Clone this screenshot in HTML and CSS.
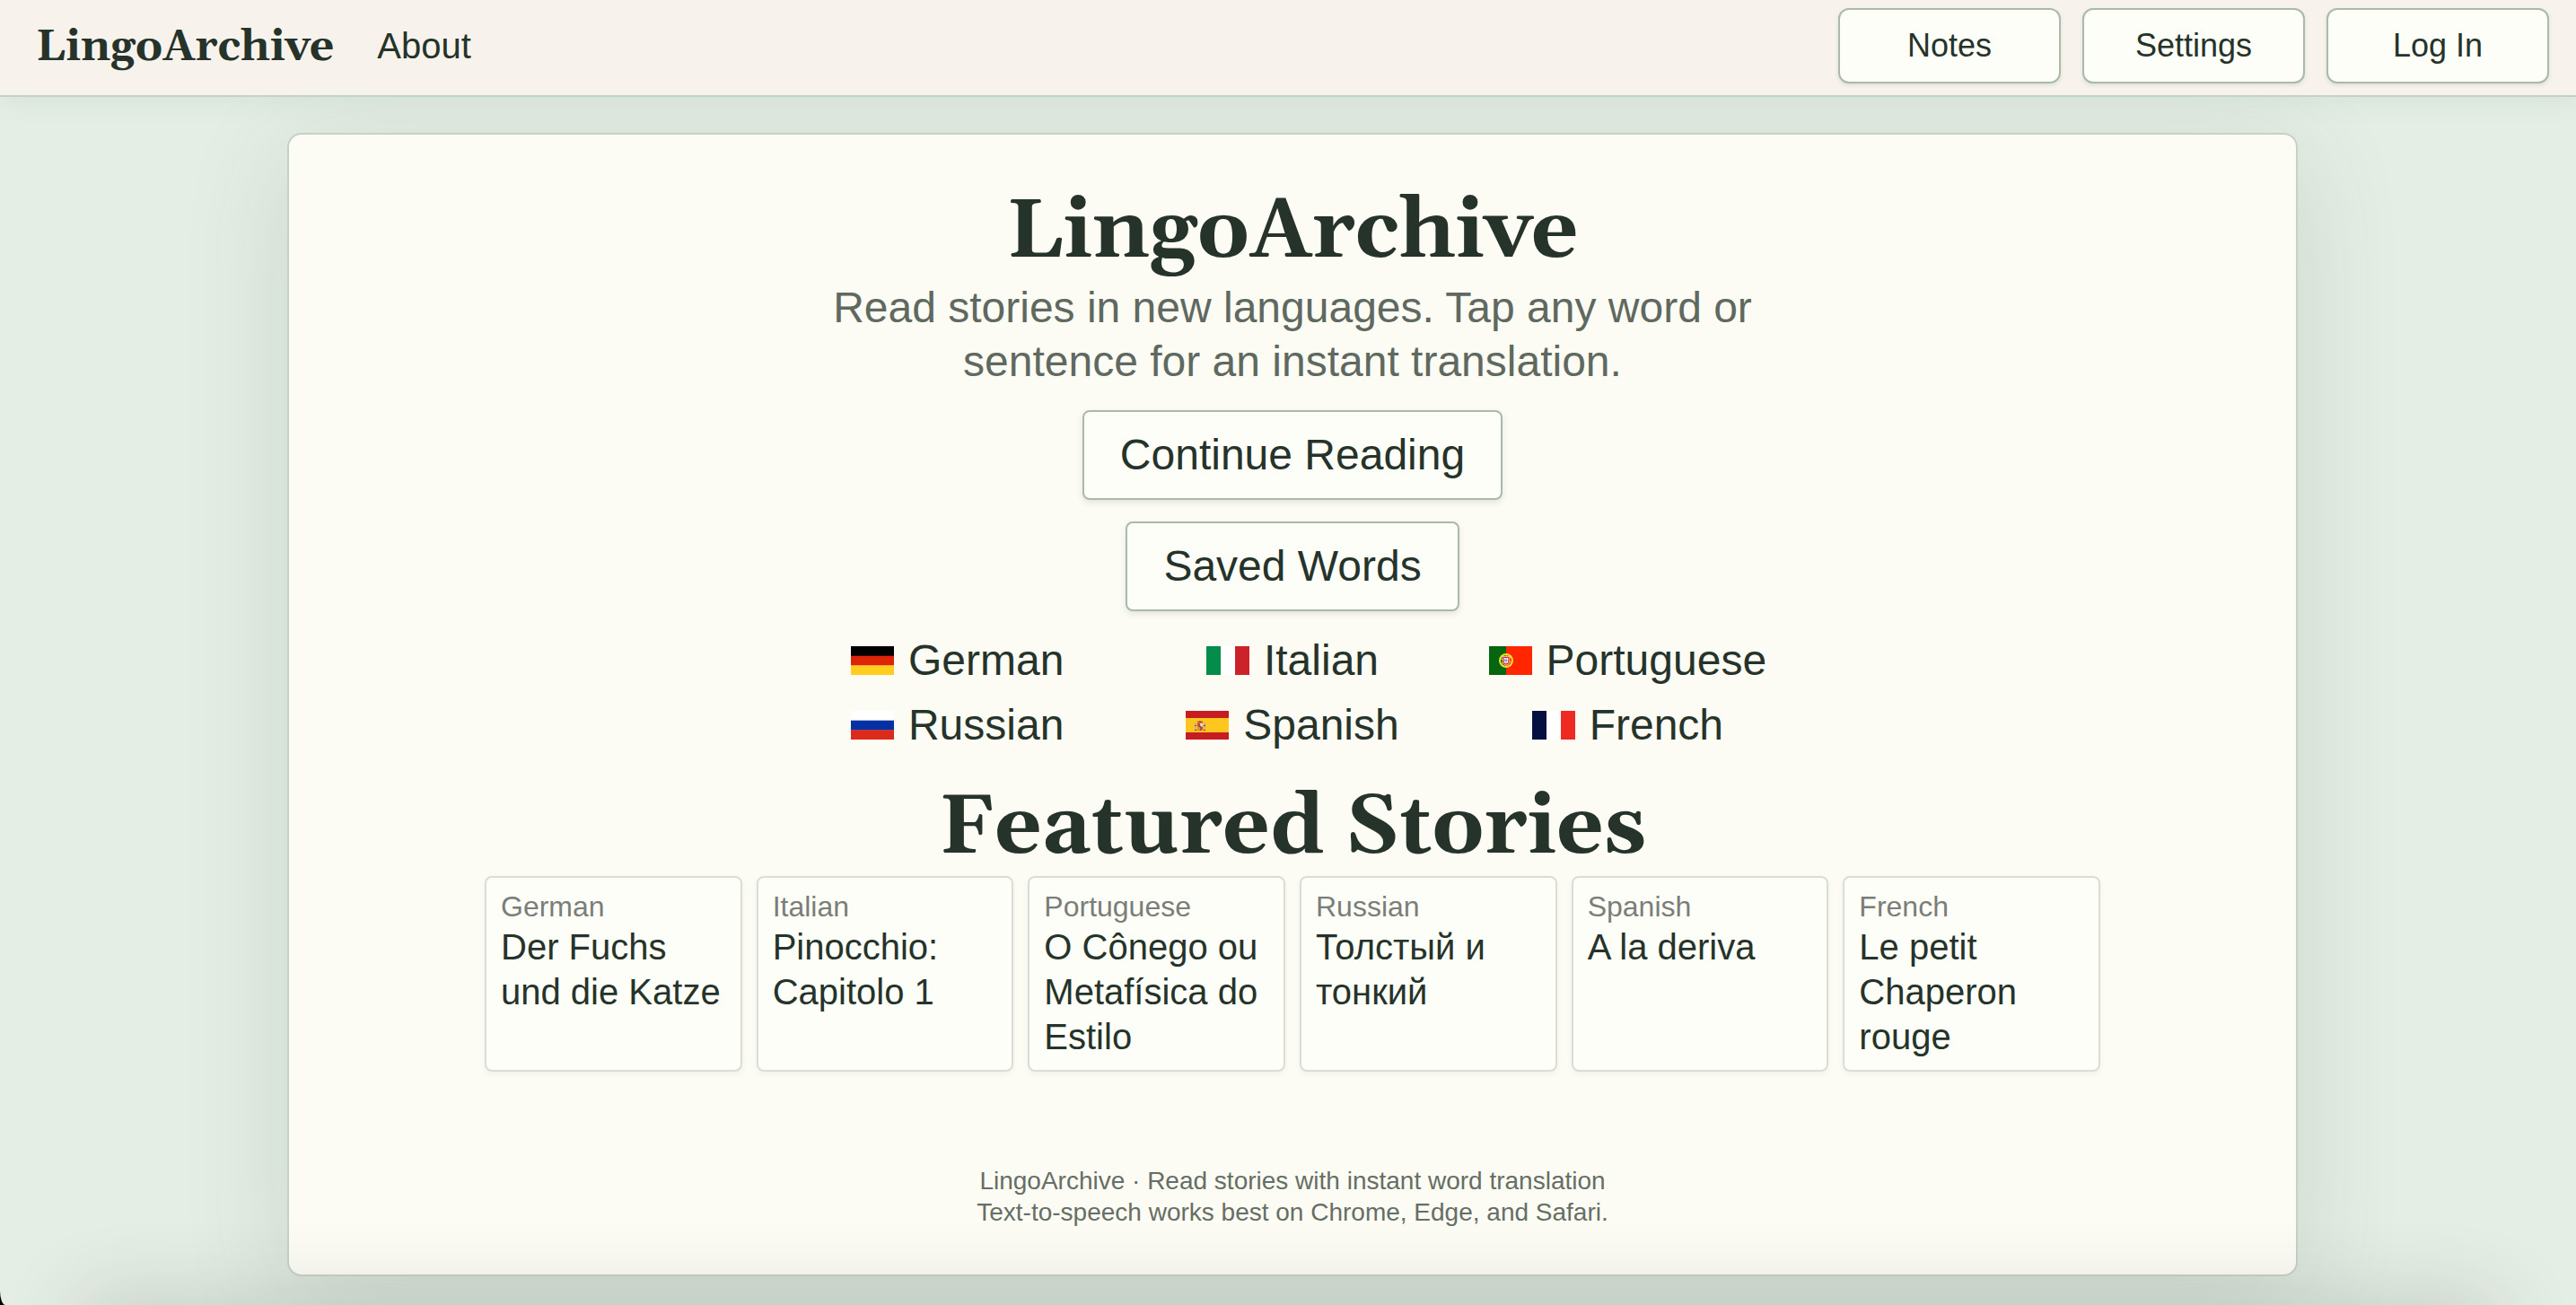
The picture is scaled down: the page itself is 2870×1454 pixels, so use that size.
FILE: index.html
```html
<!DOCTYPE html>
<html lang="en">
<head>
  <meta charset="UTF-8">
  <meta name="viewport" content="width=device-width, initial-scale=1.0">
  <title>LingoArchive</title>
  <link rel="stylesheet" href="styles.css">
</head>
<body>

  <header class="site-header">
    <nav class="nav-left">
      <a class="brand" href="#">LingoArchive</a>
      <a class="nav-link" href="#">About</a>
    </nav>
    <div class="nav-actions">
      <button class="nav-btn">Notes</button>
      <button class="nav-btn">Settings</button>
      <button class="nav-btn">Log In</button>
    </div>
  </header>

  <main class="page-card">
    <h1 class="title">LingoArchive</h1>
    <p class="tagline">Read stories in new languages. Tap any word or sentence for an instant translation.</p>

    <div class="cta">
      <a class="cta-btn" href="#">Continue Reading</a>
      <a class="cta-btn" href="#">Saved Words</a>
    </div>

    <div class="languages">
      <a class="language" href="#">
        <svg class="flag" viewBox="0 0 48 32"><rect width="48" height="11" fill="#000"/><rect y="10.7" width="48" height="11" fill="#de2408"/><rect y="21.3" width="48" height="10.7" fill="#ffcc1f"/></svg>
        German
      </a>
      <a class="language" href="#">
        <svg class="flag" viewBox="0 0 48 32"><rect width="48" height="32" fill="#fff"/><rect width="16" height="32" fill="#048c4a"/><rect x="32" width="16" height="32" fill="#cc2229"/></svg>
        Italian
      </a>
      <a class="language" href="#">
        <svg class="flag" viewBox="0 0 48 32">
          <rect width="48" height="32" fill="#ff2600"/><rect width="19" height="32" fill="#06650f"/>
          <circle cx="19" cy="16" r="7" fill="none" stroke="#f0e02c" stroke-width="2"/>
          <path d="M12.5 14 25.5 18M13 20 25 11M19 8.5v15" stroke="#f0e02c" stroke-width=".9"/>
          <path d="M15.2 11.5h7.6v5.8a3.8 3.8 0 0 1-7.6 0z" fill="#ea2a20" stroke="#fff" stroke-width=".6"/>
          <path d="M16.8 13h4.4v4a2.2 2.2 0 0 1-4.4 0z" fill="#fff"/>
          <path d="M19 13.3v5M17.2 15.6h3.6" stroke="#4a68b4" stroke-width="1.1" stroke-dasharray="1.2 .7"/>
        </svg>
        Portuguese
      </a>
      <a class="language" href="#">
        <svg class="flag" viewBox="0 0 48 32"><rect width="48" height="11" fill="#fff"/><rect y="10.7" width="48" height="11" fill="#0432a4"/><rect y="21.3" width="48" height="10.7" fill="#dc2a1b"/></svg>
        Russian
      </a>
      <a class="language" href="#">
        <svg class="flag" viewBox="0 0 48 32">
          <rect width="48" height="32" fill="#c61d22"/><rect y="8" width="48" height="16" fill="#ffc61f"/>
          <path d="M11 13v8M21 13v8" stroke="#b9aa9c" stroke-width="1.5"/>
          <path d="M10 21.5h2.4M19.6 21.5H22M10 16.5h2M20 16.5h2" stroke="#ad3330" stroke-width="1.2"/>
          <path d="M13 14h6v5.2a3 3 0 0 1-6 0z" fill="#c4473e"/>
          <path d="M16 14h3v3.5h-3z" fill="#ddd5dc"/><path d="M13 17.5h3V22a3 3 0 0 1-3-2.5z" fill="#d99b2b"/>
          <circle cx="16" cy="17.6" r="1" fill="#3f5aa8"/>
          <path d="M13.3 13.5 13 11.2l1.7.8 1.3-1.3 1.3 1.3 1.7-.8-.3 2.3z" fill="#a84a28"/>
        </svg>
        Spanish
      </a>
      <a class="language" href="#">
        <svg class="flag" viewBox="0 0 48 32"><rect width="48" height="32" fill="#fff"/><rect width="16" height="32" fill="#020f40"/><rect x="32" width="16" height="32" fill="#ef2a22"/></svg>
        French
      </a>
    </div>

    <h2 class="title featured">Featured Stories</h2>
    <div class="stories">
      <a class="story" href="#">
        <span class="story-lang">German</span>
        <span class="story-title">Der Fuchs und die Katze</span>
      </a>
      <a class="story" href="#">
        <span class="story-lang">Italian</span>
        <span class="story-title">Pinocchio: Capitolo 1</span>
      </a>
      <a class="story" href="#">
        <span class="story-lang">Portuguese</span>
        <span class="story-title">O Cônego ou Metafísica do Estilo</span>
      </a>
      <a class="story" href="#">
        <span class="story-lang">Russian</span>
        <span class="story-title">Толстый и тонкий</span>
      </a>
      <a class="story" href="#">
        <span class="story-lang">Spanish</span>
        <span class="story-title">A la deriva</span>
      </a>
      <a class="story" href="#">
        <span class="story-lang">French</span>
        <span class="story-title">Le petit Chaperon rouge</span>
      </a>
    </div>

    <footer class="site-footer">
      <p>LingoArchive · Read stories with instant word translation</p>
      <p>Text-to-speech works best on Chrome, Edge, and Safari.</p>
    </footer>
  </main>

  <div class="page-fade"></div>
</body>
</html>
```

FILE: styles.css
```css
:root {
  --ink: #26332a;
  --muted: #5f695f;
  --faint: #7b7d78;
  --page: #e5eee5;
  --card: #fcfcf4;
  --paper: #fefef8;
  --line: #c3d2c6;
  --line-strong: #a9b9ac;
  --serif: Georgia, Gelasio, "Liberation Serif", serif;
  --sans: "Liberation Sans", Arial, sans-serif;
}

* { box-sizing: border-box; margin: 0; padding: 0; }

html { background: #000; }
body {
  height: 1454px;
  overflow: hidden;
  position: relative;
  background: var(--page);
  border-bottom-left-radius: 6px 16px;
  color: var(--ink);
  font-family: var(--sans);
  line-height: 1.25;
}
a { color: inherit; text-decoration: none; }

/* header */
.site-header {
  position: relative;
  z-index: 2;
  height: 108px;
  display: flex;
  justify-content: space-between;
  align-items: center;
  padding: 0 30px 4px 40px;
  background: #f7f3ec;
  border-bottom: 2px solid var(--line);
  box-shadow: 0 4px 28px rgba(60, 100, 75, 0.09);
}
.nav-left {
  display: flex;
  align-items: center;
  gap: 48px;
}
.brand {
  padding-top: 3px;
  font-family: var(--serif);
  font-size: 48px;
  font-weight: bold;
}
.nav-link { font-size: 40px; }
.nav-actions { display: flex; gap: 24px; }
.nav-btn {
  width: 248px;
  height: 84px;
  font-family: var(--sans);
  font-size: 36px;
  color: var(--ink);
  background: var(--paper);
  border: 2px solid var(--line-strong);
  border-radius: 12px;
  box-shadow: 0 2px 4px rgba(38, 70, 50, 0.12);
}

/* main card */
.page-card {
  width: 2240px;
  height: 1274px;
  margin: 40px 0 0 320px;
  padding-top: 56px;
  display: flex;
  flex-direction: column;
  align-items: center;
  background: var(--card);
  border: 2px solid var(--line);
  border-radius: 16px;
  box-shadow: 0 24px 120px rgba(50, 70, 52, 0.14);
}
.title {
  font-family: var(--serif);
  font-size: 92px;
  font-weight: bold;
  line-height: 106px;
}
.tagline {
  width: 1120px;
  margin-top: 1px;
  font-size: 48px;
  text-align: center;
  color: var(--muted);
}
.cta {
  display: flex;
  flex-direction: column;
  align-items: center;
  gap: 24px;
  margin-top: 24px;
}
.cta-btn {
  height: 100px;
  padding: 18px 40px;
  font-size: 48px;
  background: var(--paper);
  border: 2px solid var(--line-strong);
  border-radius: 8px;
  box-shadow: 0 3px 7px rgba(38, 60, 45, 0.12);
}

.languages {
  width: 1120px;
  display: grid;
  grid-template-columns: repeat(3, 1fr);
  row-gap: 12px;
  margin-top: 25px;
}
.language {
  display: flex;
  align-items: center;
  justify-content: center;
  gap: 16px;
  font-size: 48px;
}
.flag {
  width: 48px;
  height: 32px;
}

/* featured stories */
.featured { margin-top: 32px; }
.stories {
  width: 1800px;
  display: grid;
  grid-template-columns: repeat(6, 1fr);
  gap: 16px;
}
.story {
  height: 218px;
  padding: 12px 16px;
  display: flex;
  flex-direction: column;
  background: var(--paper);
  border: 2px solid #d9ddd6;
  border-radius: 8px;
  box-shadow: 0 3px 6px rgba(38, 60, 45, 0.05);
}
.story-lang {
  font-size: 32px;
  color: var(--faint);
}
.story-title { font-size: 40px; }

.site-footer {
  margin-top: 104px;
  font-size: 28px;
  text-align: center;
  color: #666e65;
}

/* shade along the bottom edge of the window */
.page-fade {
  position: absolute;
  left: 90px;
  right: 90px;
  bottom: -60px;
  height: 60px;
  z-index: 3;
  box-shadow: 0 0 90px rgba(50, 60, 52, 0.24);
}
```
